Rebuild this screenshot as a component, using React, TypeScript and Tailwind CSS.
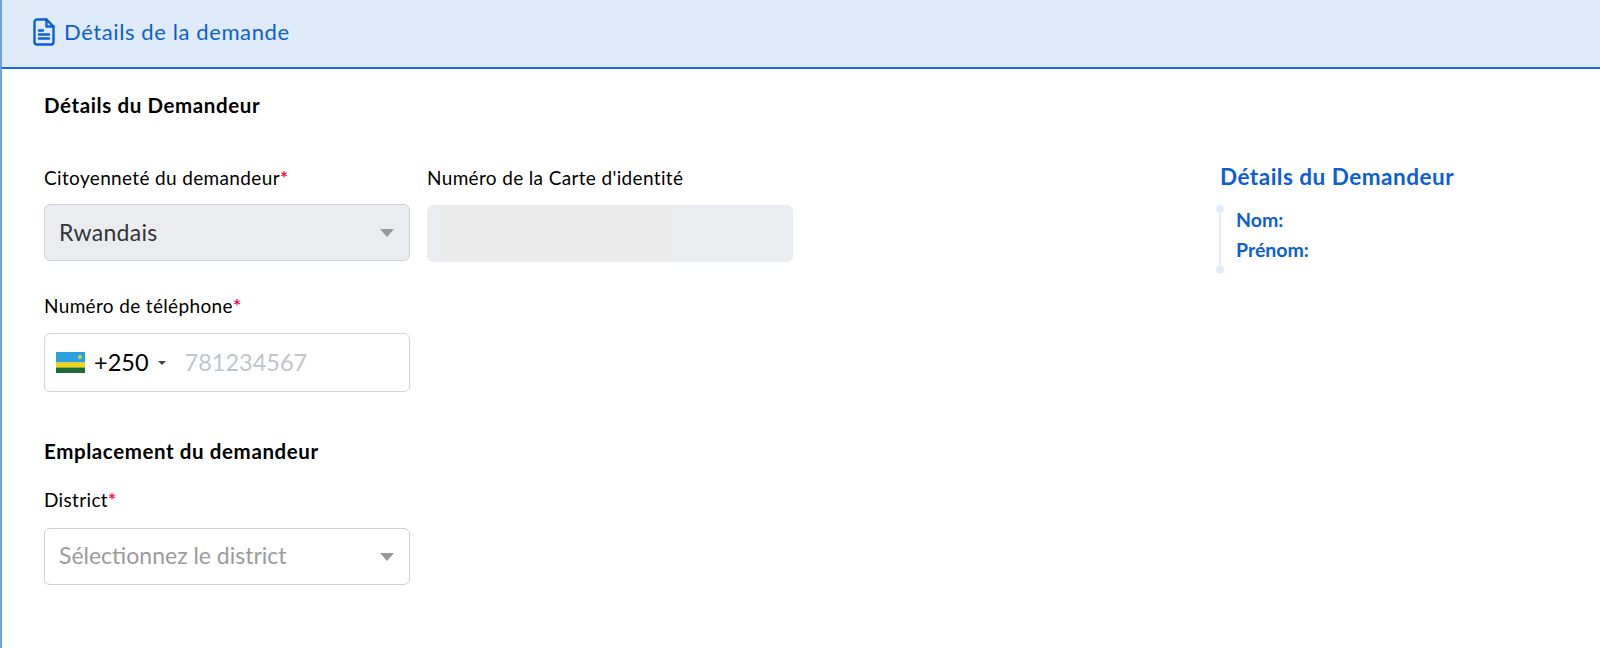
const font = "font-['Lato','Open_Sans',sans-serif]";

function Req() {
  return <span className="text-[#f5114f] font-bold">*</span>;
}

function Caret() {
  return (
    <svg width="14" height="8" viewBox="0 0 14 8" className="shrink-0">
      <path d="M0 0h14L7 8z" fill="#999999" />
    </svg>
  );
}

function DocIcon() {
  return (
    <svg width="22" height="28" viewBox="0 0 22 28" fill="none" stroke="#0b5ed7" strokeWidth="2.4" strokeLinejoin="round" strokeLinecap="round">
      <path d="M4 1.5h9.5l7 7V24a2.5 2.5 0 0 1-2.5 2.5H4A2.5 2.5 0 0 1 1.5 24V4A2.5 2.5 0 0 1 4 1.5z" />
      <path d="M13.5 1.5V8.5h7" />
      <path d="M6 12.5h4M6 16.5h10M6 20.5h10" />
    </svg>
  );
}

function RwandaFlag() {
  return (
    <svg width="29" height="21" viewBox="0 0 29 21" className="shrink-0">
      <rect width="29" height="10.5" fill="#2d9fdc" />
      <rect y="10.5" width="29" height="5" fill="#f6d30f" />
      <rect y="15.5" width="29" height="5.5" fill="#1f6b36" />
      <circle cx="24" cy="5" r="2" fill="#d8cf3a" />
    </svg>
  );
}

export default function App() {
  return (
    <div className={`${font} w-[1600px] h-[648px] overflow-hidden bg-white border-l-2 border-[#6d9ee8] text-black`}>
      <div className="h-[69px] bg-[#dfebf8] border-b-2 border-[#1a66d9] pl-[31px] pb-[4px] flex items-center gap-[9px]">
        <DocIcon />
        <span className="text-[22px] tracking-[0.6px] text-[#0b5ed7]">Détails de la demande</span>
      </div>

      <div className="pl-[42px] flex">
        <div className="w-[1176px]">
          <h2 className="mt-[24px] text-[20.5px] leading-[24px] tracking-[0.6px] font-bold">Détails du Demandeur</h2>

          <div className="mt-[49px] flex gap-[17px]">
            <div className="w-[366px]">
              <label className="block text-[19px] leading-[24px] tracking-[0.35px]">Citoyenneté du demandeur<Req /></label>
              <div className="mt-[14px] h-[57px] rounded-[6px] border border-[#cfd3d8] bg-[#ebecf0] pl-[14px] pr-[15px] flex items-center justify-between">
                <span className="text-[23px] tracking-[0.3px] text-[#2f343a]">Rwandais</span>
                <Caret />
              </div>
            </div>
            <div className="w-[366px]">
              <label className="block text-[19px] leading-[24px] tracking-[0.35px]">Numéro de la Carte d'identité</label>
              <div className="mt-[15px] h-[57px] rounded-[6px] bg-[#ebecf0] pl-[14px] py-[2px]">
                <div className="h-full w-[232px] bg-[#ebebeb]" />
              </div>
            </div>
          </div>

          <label className="block mt-[32px] text-[19px] leading-[24px] tracking-[0.35px]">Numéro de téléphone<Req /></label>
          <div className="mt-[15px] w-[366px] h-[59px] rounded-[6px] border border-[#d0d5dc] pl-[11px] flex items-center">
            <RwandaFlag />
            <span className="ml-[9px] text-[23.5px]">+250</span>
            <span className="ml-[9px] w-0 h-0 border-x-[4px] border-x-transparent border-t-[4px] border-t-[#444444]" />
            <span className="ml-[19px] text-[23.5px] text-[#bfc5cc]">781234567</span>
          </div>

          <h2 className="mt-[47px] text-[20.5px] leading-[24px] tracking-[0.6px] font-bold">Emplacement du demandeur</h2>
          <label className="block mt-[25px] text-[19px] leading-[24px] tracking-[0.35px]">District<Req /></label>
          <div className="mt-[16px] w-[366px] h-[57px] rounded-[6px] border border-[#cfcfcf] pl-[14px] pr-[15px] flex items-center justify-between">
            <span className="pb-[3px] text-[23px] text-[#9b9b9b]">Sélectionnez le district</span>
            <Caret />
          </div>
        </div>

        <div className="mt-[94px] text-[#0b5ed7] font-bold">
          <h3 className="text-[22.5px] leading-[28px] tracking-[0.5px]">Détails du Demandeur</h3>
          <div className="mt-[14px] -ml-[4px] flex">
            <div className="flex flex-col items-center w-[8px] h-[69px]">
              <span className="w-[8px] h-[8px] rounded-full bg-[#e0ecfa]" />
              <span className="w-[2px] flex-1 bg-[#e0ecfa]" />
              <span className="w-[8px] h-[8px] rounded-full bg-[#e0ecfa]" />
            </div>
            <div className="ml-[12px] text-[19.5px] leading-[30px]">
              <div>Nom:</div>
              <div>Prénom:</div>
            </div>
          </div>
        </div>
      </div>
    </div>
  );
}
